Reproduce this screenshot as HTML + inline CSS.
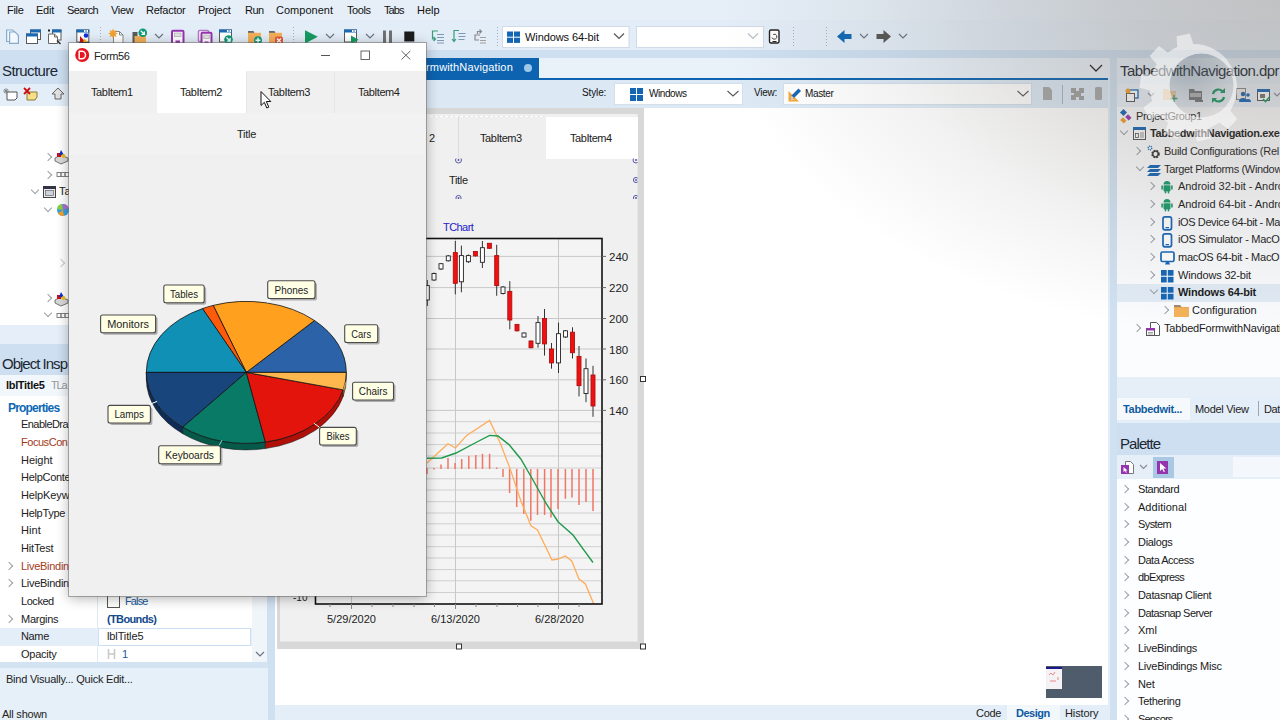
<!DOCTYPE html>
<html><head>
<meta charset="utf-8">
<title>IDE</title>
<style>
*{box-sizing:border-box;margin:0;padding:0}
html,body{width:1280px;height:720px;overflow:hidden}
body{font-family:"Liberation Sans",sans-serif;font-size:11px;color:#1a1a1a;background:#e4eef8;position:relative}
.abs{position:absolute}
.t{position:absolute;white-space:nowrap;line-height:1}
#menubar{left:0;top:0;width:1280px;height:20px;background:#e6eff8}
#toolbar{left:0;top:20px;width:1280px;height:30px;background:#e3edf7}
.menu{top:5px;font-size:11px;color:#111}
.combo{background:#fff;border:1px solid #c5d3e0;height:21px}
/* left */
#left{left:0;top:58px;width:268px;height:664px;background:#e3eef8}
/* center */
#center{left:268px;top:58px;width:844px;height:664px;background:#e3eef8}
/* right */
#right{left:1112px;top:58px;width:168px;height:664px;background:#e9f1f8}
.hdr{font-size:15px;color:#1c2733}
.tree{font-size:11px;color:#1a1a1a}
.chev{position:absolute;width:6px;height:6px;border-right:1px solid #9aa0a6;border-top:1px solid #9aa0a6;transform:rotate(45deg)}
.chevd{position:absolute;width:6px;height:6px;border-right:1px solid #9aa0a6;border-bottom:1px solid #9aa0a6;transform:rotate(45deg)}
</style>
</head>
<body>
<div id="menubar" class="abs"></div>
<div id="toolbar" class="abs"></div>
<div class="abs" style="left:0;top:50px;width:1280px;height:8px;background:#cddff1"></div>
<div id="left" class="abs"></div>
<div id="center" class="abs"></div>
<div id="right" class="abs"></div>

<div class="t menu" style="left: 7px; letter-spacing: -0.31px;">File</div>
<div class="t menu" style="left: 36px; letter-spacing: -0.24px;">Edit</div>
<div class="t menu" style="left: 67px; letter-spacing: -0.64px;">Search</div>
<div class="t menu" style="left: 111px; letter-spacing: -0.29px;">View</div>
<div class="t menu" style="left: 146px; letter-spacing: -0.26px;">Refactor</div>
<div class="t menu" style="left: 198px; letter-spacing: -0.25px;">Project</div>
<div class="t menu" style="left: 245px; letter-spacing: -0.56px;">Run</div>
<div class="t menu" style="left: 276px; letter-spacing: 0.01px;">Component</div>
<div class="t menu" style="left: 347px; letter-spacing: -0.44px;">Tools</div>
<div class="t menu" style="left: 384px; letter-spacing: -0.94px;">Tabs</div>
<div class="t menu" style="left: 417px; letter-spacing: -0.03px;">Help</div>
<svg class="abs" style="left:0;top:20px" width="1280" height="36" viewBox="0 20 1280 36">
 <g fill="#f2f8fd" stroke="#86abcd" stroke-width="1.200"><path d="M6.600 30h6l2.500 2.500v9h-8.500z"></path><path d="M9.600 32h5.500l3.300 3.300v8h-8.800z"></path></g>
 <g><rect x="30.500" y="30" width="10" height="9.500" fill="#fff" stroke="#5a5a5a"></rect><rect x="30" y="29.500" width="11" height="3" fill="#1b68b3"></rect><rect x="26.500" y="34" width="11" height="9.500" fill="#fff" stroke="#5a5a5a"></rect><rect x="26" y="33.500" width="12" height="3" fill="#1b68b3"></rect></g>
 <g><rect x="52.500" y="30" width="8.500" height="10" fill="#fff" stroke="#5a5a5a"></rect><rect x="52" y="29.500" width="9.500" height="3" fill="#1b68b3"></rect><rect x="48" y="29.500" width="2" height="2" fill="#222"></rect><path d="M48.500 34h6l3 3v6.500h-9z" fill="#fff" stroke="#666"></path><path d="M54.500 34v3h3" fill="none" stroke="#666"></path><path d="M57 40.500l3.500 3.500" stroke="#333" stroke-width="1.600"></path></g>
 <g><rect x="76.800" y="30" width="12" height="12" fill="#fff" stroke="#5a5a5a"></rect><rect x="76.300" y="29.500" width="13" height="3" fill="#1b68b3"></rect><rect x="84" y="30" width="1.500" height="2" fill="#fff"></rect><rect x="86.500" y="30" width="1.500" height="2" fill="#fff"></rect><circle cx="86" cy="35.500" r="2.300" fill="#1030e0"></circle><path d="M80 36l5.500 6h-5.500z" fill="#d01010"></path><path d="M84 38.500l5 4.500h-6z" fill="#e8c020"></path><path d="M79 42h10.500v1.500h-10.500z" fill="#111"></path></g>
 <g fill="#a5aeb8"><rect x="100" y="27" width="1" height="1"></rect><rect x="100" y="30" width="1" height="1"></rect><rect x="100" y="33" width="1" height="1"></rect><rect x="100" y="36" width="1" height="1"></rect><rect x="100" y="39" width="1" height="1"></rect><rect x="100" y="42" width="1" height="1"></rect><rect x="100" y="45" width="1" height="1"></rect></g>
 <g><path d="M113.500 31.500h6l3.500 3.500v9h-9.500z" fill="#fff" stroke="#888"></path><path d="M119.500 31.500v3.500h3.500" fill="none" stroke="#888"></path><path d="M113 28.500l1 2.500 2.500-1-1 2.500 2.500 1-2.500 1 1 2.500-2.500-1-1 2.500-1-2.500-2.500 1 1-2.500-2.500-1 2.500-1-1-2.500 2.500 1z" fill="#f0a030"></path></g>
 <g><rect x="132.500" y="32" width="5" height="12" fill="#5a5a5a"></rect><path d="M134.500 36h11.500v8.500h-11.500z" fill="#f3ae58"></path><circle cx="142.800" cy="32.800" r="4.300" fill="#0f9a78"></circle><path d="M140.800 30.800l3.600 3.600m0-3v3h-3" stroke="#fff" stroke-width="1.300" fill="none"></path></g>
 <path d="M155 34l4 4 4-4" stroke="#6a7480" stroke-width="1.200" fill="none"></path>
 <g><rect x="172" y="30.800" width="11.500" height="13" rx="1" fill="#fff" stroke="#9434ae" stroke-width="2"></rect><rect x="174.500" y="33" width="6.500" height="3.500" fill="#e4e4e4" stroke="#aaa" stroke-width=".7"></rect><rect x="175.500" y="40.500" width="4.500" height="3.500" fill="#9434ae"></rect></g>
 <g><rect x="198.500" y="30.500" width="10" height="11" rx="1" fill="#fff" stroke="#b07ac8" stroke-width="1.500"></rect><rect x="201.500" y="32.800" width="10" height="11" rx="1" fill="#fff" stroke="#9434ae" stroke-width="2"></rect><rect x="203.800" y="35" width="5.500" height="3.300" fill="#e4e4e4" stroke="#aaa" stroke-width=".7"></rect><rect x="204.500" y="41.500" width="4" height="2.500" fill="#9434ae"></rect></g>
 <g><rect x="219.500" y="30" width="12" height="12" fill="#fff" stroke="#5a5a5a"></rect><rect x="219" y="29.500" width="13" height="3" fill="#1b68b3"></rect><rect x="227" y="30" width="1.500" height="2" fill="#fff"></rect><rect x="229.500" y="30" width="1.500" height="2" fill="#fff"></rect><circle cx="228.500" cy="39.500" r="4.300" fill="#0f9a78"></circle><path d="M226.500 37.500l3.600 3.600m0-3v3h-3" stroke="#fff" stroke-width="1.300" fill="none"></path></g>
 <g><path d="M248 31h5.500l1 2h-6.500z" fill="#6a6a6a"></path><path d="M248 32.800h13v11.500h-13z" fill="#f3ae58"></path><circle cx="258" cy="40.300" r="4" fill="#0f9a78"></circle><path d="M258 37.800v5m-2.500-2.500h5" stroke="#fff" stroke-width="1.400"></path></g>
 <g><path d="M269 31h5.500l1 2h-6.500z" fill="#6a6a6a"></path><path d="M269 32.800h13v11.500h-13z" fill="#f3ae58"></path><rect x="275" y="36.500" width="8" height="8" rx="1.800" fill="#e2583a"></rect><path d="M277 38.500l4 4m0-4l-4 4" stroke="#fff" stroke-width="1.300"></path></g>
 <g fill="#a5aeb8"><rect x="293" y="27" width="1" height="1"></rect><rect x="293" y="30" width="1" height="1"></rect><rect x="293" y="33" width="1" height="1"></rect><rect x="293" y="36" width="1" height="1"></rect><rect x="293" y="39" width="1" height="1"></rect><rect x="293" y="42" width="1" height="1"></rect><rect x="293" y="45" width="1" height="1"></rect></g>
 <path d="M305 30.200l12.800 6.600-12.800 6.600z" fill="#169a62"></path>
 <path d="M326 34l4 4 4-4" stroke="#6a7480" stroke-width="1.200" fill="none"></path>
 <g><rect x="344.500" y="30" width="12" height="12" fill="#fff" stroke="#5a5a5a"></rect><rect x="344" y="29.500" width="13" height="3" fill="#1b68b3"></rect><rect x="352" y="30" width="1.500" height="2" fill="#fff"></rect><rect x="354.500" y="30" width="1.500" height="2" fill="#fff"></rect><path d="M351 35.500l7.500 4.300-7.500 4.300z" fill="#169a62"></path></g>
 <path d="M366 34l4 4 4-4" stroke="#6a7480" stroke-width="1.200" fill="none"></path>
 <rect x="383" y="30.500" width="3" height="13" fill="#707070"></rect><rect x="389" y="30.500" width="3" height="13" fill="#707070"></rect>
 <rect x="404.300" y="31.500" width="10" height="10" fill="#1c1c1c"></rect>
 <g stroke="#3a9a7a" fill="none" stroke-width="1.200"><path d="M438 31h-5.500v8h3m-2-2l2 2-2 2"></path></g><g stroke="#7f99b5" stroke-width="1.100"><path d="M437 34.500h7M437 37.500h7M437 40.500h7M437 43h7"></path></g>
 <g stroke="#3a9a7a" fill="none" stroke-width="1.200"><path d="M459 30.500h-5v11m-2-2.500l2 2.500 2-2.500"></path></g><g stroke="#7f99b5" stroke-width="1.100"><path d="M458.500 33.500h7M458.500 36.500h7M458.500 39.500h6"></path></g>
 <g stroke="#8a8a8a" fill="none" stroke-width="1.200"><path d="M480 35h-5v5h4M477.500 34v-2.500h4m-2-2l2 2-2 2"></path></g><g stroke="#a0a0a0" stroke-width="1.100"><path d="M480 37.500h6M480 40.500h6M480 43h6"></path></g>
 <g fill="#a5aeb8"><rect x="497" y="27" width="1" height="1"></rect><rect x="497" y="30" width="1" height="1"></rect><rect x="497" y="33" width="1" height="1"></rect><rect x="497" y="36" width="1" height="1"></rect><rect x="497" y="39" width="1" height="1"></rect><rect x="497" y="42" width="1" height="1"></rect><rect x="497" y="45" width="1" height="1"></rect></g>
 <rect x="502.500" y="26.500" width="126.500" height="21" fill="#fff" stroke="#cfdbe7"></rect>
 <g fill="#1565b5"><rect x="507" y="31.500" width="6" height="5.200"></rect><rect x="514" y="31.500" width="6" height="5.200"></rect><rect x="507" y="37.700" width="6" height="5.200"></rect><rect x="514" y="37.700" width="6" height="5.200"></rect></g>
 <path d="M614 33.500l5 5 5-5" stroke="#555" stroke-width="1.200" fill="none"></path>
 <rect x="636.500" y="26.500" width="127" height="21" fill="#fff" stroke="#cfdbe7"></rect>
 <path d="M748 33.500l5 5 5-5" stroke="#b8c0c8" stroke-width="1.200" fill="none"></path>
 <g><rect x="769.500" y="30" width="9.500" height="13" rx="1.500" fill="#fff" stroke="#222" stroke-width="1.400"></rect><path d="M772 37.500a2.500 2.500 0 1 0 1.200-3" stroke="#444" fill="none"></path><path d="M772.500 41.500h4" stroke="#222"></path></g>
 <g fill="#a5aeb8"><rect x="793" y="27" width="1" height="1"></rect><rect x="793" y="30" width="1" height="1"></rect><rect x="793" y="33" width="1" height="1"></rect><rect x="793" y="36" width="1" height="1"></rect><rect x="793" y="39" width="1" height="1"></rect><rect x="793" y="42" width="1" height="1"></rect><rect x="793" y="45" width="1" height="1"></rect></g><g fill="#a5aeb8"><rect x="826" y="27" width="1" height="1"></rect><rect x="826" y="30" width="1" height="1"></rect><rect x="826" y="33" width="1" height="1"></rect><rect x="826" y="36" width="1" height="1"></rect><rect x="826" y="39" width="1" height="1"></rect><rect x="826" y="42" width="1" height="1"></rect><rect x="826" y="45" width="1" height="1"></rect></g>
 <path d="M837 36.500l7.500-6.500v4h7v5h-7v4z" fill="#0d67b5"></path>
 <path d="M860 34l4 4 4-4" stroke="#6a7480" stroke-width="1.200" fill="none"></path>
 <path d="M891 36.500l-7.500-6.500v4h-7v5h7v4z" fill="#555"></path>
 <path d="M899 34l4 4 4-4" stroke="#6a7480" stroke-width="1.200" fill="none"></path>
</svg>
<div class="t" style="left: 525px; top: 32px; font-size: 11px; color: rgb(17, 17, 17); letter-spacing: -0.09px;">Windows 64-bit</div>


<div class="abs" style="left:0;top:52px;width:268px;height:32px;background:#cddff0"></div>
<div class="t hdr" style="left: 2px; top: 63px; letter-spacing: -0.6px;">Structure</div>
<div class="abs" style="left:0;top:84px;width:268px;height:22px;background:#e3eef8"></div>
<svg class="abs" style="left:0;top:84px" width="70" height="22" viewBox="0 84 70 22">
 <path d="M7 92h10v6l-2 2h-8z" fill="#fff" stroke="#555"></path><path d="M6 88v6m-3-3h6m-5-2l4 4m0-4l-4 4" stroke="#777" stroke-width=".8"></path>
 <path d="M27 92h10v5l-2 3h-8z" fill="#f5e08a" stroke="#8a7a30"></path><path d="M24 88l6 6m0-6l-6 6" stroke="#d01010" stroke-width="1.800"></path>
 <path d="M58 88l6 6h-3v5h-6v-5h-3z" fill="#e0e0e0" stroke="#666"></path>
</svg>
<div class="abs" style="left:0;top:106px;width:268px;height:218.500px;background:#fff"></div>
<div class="chev" style="left:45px;top:154px"></div>
<div class="chev" style="left:45px;top:172px"></div>
<div class="chevd" style="left:32px;top:187px"></div>
<div class="chevd" style="left:45px;top:205px"></div>
<div class="chev" style="left:58px;top:260px;border-color:#c5c9ce"></div>
<div class="chev" style="left:45px;top:295px"></div>
<div class="chevd" style="left:45px;top:310px"></div>
<svg class="abs" style="left:40px;top:148px" width="30" height="175" viewBox="40 148 30 175">
 <g id="cmp"><path d="M55 158l6-3 7 3v3l-7 3-6-3z" fill="#d8d8d8" stroke="#555" stroke-width=".8"></path><rect x="57" y="153" width="4" height="4" fill="#d01010"></rect><path d="M61 150l3 5h-5z" fill="#1030d0"></path><circle cx="63.500" cy="156" r="2" fill="#e8c020"></circle></g>
 <g fill="none" stroke="#777" stroke-width=".9"><rect x="57" y="172.500" width="4" height="4"></rect><rect x="61" y="172.500" width="4" height="4"></rect><rect x="65" y="172.500" width="4" height="4"></rect></g>
 <rect x="43.500" y="186.500" width="12" height="11" fill="#e8eaee" stroke="#444"></rect><rect x="43" y="186" width="13" height="3" fill="#334"></rect><rect x="45.500" y="190.500" width="8" height="5" fill="#cfd3da" stroke="#666" stroke-width=".7"></rect>
 <g><circle cx="63" cy="210" r="6" fill="#3aa0e0"></circle><path d="M63 210l-6-1a6 6 0 0 1 5-5z" fill="#8ad040"></path><path d="M63 210v-6a6 6 0 0 1 5.500 4z" fill="#b070d0"></path><path d="M63 210l-5 3.500a6 6 0 0 0 6 2.500z" fill="#f0a030"></path></g>
 <g transform="translate(0,142)"><path d="M55 158l6-3 7 3v3l-7 3-6-3z" fill="#d8d8d8" stroke="#555" stroke-width=".8"></path><rect x="57" y="153" width="4" height="4" fill="#d01010"></rect><path d="M61 150l3 5h-5z" fill="#1030d0"></path><circle cx="63.500" cy="156" r="2" fill="#e8c020"></circle></g>
 <g fill="none" stroke="#777" stroke-width=".9"><rect x="57" y="313.500" width="4" height="4"></rect><rect x="61" y="313.500" width="4" height="4"></rect><rect x="65" y="313.500" width="4" height="4"></rect></g>
</svg>
<div class="t" style="left:59px;top:186px;font-size:11px;color:#222">Ta</div>
<div class="abs" style="left:0;top:324.500px;width:268px;height:19px;background:#e6eff9"></div>
<div class="abs" style="left:0;top:344px;width:268px;height:31px;background:#cddff0"></div>
<div class="t hdr" style="left: 2px; top: 356px; letter-spacing: -0.99px;">Object Insp</div>
<div class="abs" style="left:0;top:375px;width:268px;height:21px;background:#f2f7fc"></div>
<div class="t" style="left: 6px; top: 380px; font-size: 11px; font-weight: bold; color: rgb(17, 17, 17); letter-spacing: -0.32px;">lblTitle5</div>
<div class="t" style="left: 51px; top: 380px; font-size: 11px; color: rgb(153, 153, 153); letter-spacing: -1.16px;">TLa</div>
<div class="abs" style="left:0;top:396px;width:268px;height:266px;background:#fff"></div>
<div class="t" style="left: 8px; top: 402px; font-size: 12px; font-weight: bold; color: rgb(13, 103, 181); letter-spacing: -0.81px;">Properties</div>
<div class="abs" style="left:97px;top:415px;width:1px;height:247px;background:#e0e9f2"></div>
<div class="abs" style="left:0;top:628px;width:252px;height:18px;background:#e3eef9"></div>
<div class="abs" style="left:98px;top:628px;width:153px;height:18px;background:#fff;border:1px solid #cbe0f4"></div>
<div class="abs" style="left:252px;top:415px;width:15px;height:247px;background:#f0f5fa"></div>
<div class="abs" style="left:267px;top:330px;width:8px;height:390px;background:#cfe0f1"></div>
<svg class="abs" style="left:254px;top:649px" width="12" height="10"><path d="M2 3l4 4 4-4" stroke="#6a7480" stroke-width="1.200" fill="none"></path></svg>
<div class="t" style="left: 21px; top: 419px; font-size: 11px; color: rgb(34, 34, 34); letter-spacing: -0.55px;">EnableDra</div>
<div class="t" style="left: 21px; top: 437px; font-size: 11px; color: rgb(162, 58, 26); letter-spacing: -0.46px;">FocusCon</div>
<div class="t" style="left: 21px; top: 455px; font-size: 11px; color: rgb(34, 34, 34); letter-spacing: -0.05px;">Height</div>
<div class="t" style="left: 21px; top: 472px; font-size: 11px; color: rgb(34, 34, 34); letter-spacing: -0.28px;">HelpConte</div>
<div class="t" style="left: 21px; top: 490px; font-size: 11px; color: rgb(34, 34, 34); letter-spacing: -0.13px;">HelpKeyw</div>
<div class="t" style="left: 21px; top: 508px; font-size: 11px; color: rgb(34, 34, 34); letter-spacing: -0.31px;">HelpType</div>
<div class="t" style="left: 21px; top: 525px; font-size: 11px; color: rgb(34, 34, 34); letter-spacing: 0.11px;">Hint</div>
<div class="t" style="left: 21px; top: 543px; font-size: 11px; color: rgb(34, 34, 34); letter-spacing: -0.16px;">HitTest</div>
<div class="t" style="left: 21px; top: 561px; font-size: 11px; color: rgb(162, 58, 26); letter-spacing: -0.28px;">LiveBindin</div>
<div class="chev" style="left:6px;top:563px"></div>
<div class="t" style="left: 21px; top: 578px; font-size: 11px; color: rgb(34, 34, 34); letter-spacing: -0.28px;">LiveBindin</div>
<div class="chev" style="left:6px;top:580px"></div>
<div class="t" style="left: 21px; top: 596px; font-size: 11px; color: rgb(34, 34, 34); letter-spacing: -0.45px;">Locked</div>
<div class="t" style="left: 21px; top: 614px; font-size: 11px; color: rgb(34, 34, 34); letter-spacing: -0.26px;">Margins</div>
<div class="chev" style="left:6px;top:616px"></div>
<div class="t" style="left: 21px; top: 631px; font-size: 11px; color: rgb(34, 34, 34); letter-spacing: -0.36px;">Name</div>
<div class="t" style="left: 21px; top: 649px; font-size: 11px; color: rgb(34, 34, 34); letter-spacing: -0.24px;">Opacity</div>

<div class="abs" style="left:107px;top:595px;width:13px;height:13px;background:#fff;border:1px solid #555"></div>
<div class="t" style="left: 125px; top: 596px; font-size: 11px; color: rgb(26, 90, 154); letter-spacing: -0.86px;">False</div>
<div class="t" style="left: 107px; top: 614px; font-size: 11px; font-weight: bold; color: rgb(18, 74, 138); letter-spacing: -0.63px;">(TBounds)</div>
<div class="t" style="left: 107px; top: 631px; font-size: 11px; color: rgb(34, 34, 34); letter-spacing: -0.12px;">lblTitle5</div>
<svg class="abs" style="left:106px;top:647px" width="12" height="14"><path d="M2.500 2v10M8.500 2v10M2.500 7h6" stroke="#c8c8c8" stroke-width="1.500" fill="none"></path></svg>
<div class="t" style="left:122px;top:649px;font-size:11px;color:#1a5a9a">1</div>
<div class="abs" style="left:0;top:662px;width:268px;height:6px;background:#d3e3f2"></div>
<div class="abs" style="left:0;top:668px;width:268px;height:52px;background:#e6f0f9"></div>
<div class="t" style="left: 6px; top: 674px; font-size: 11px; color: rgb(34, 34, 34); letter-spacing: -0.23px;">Bind Visually... Quick Edit...</div>
<div class="t" style="left: 2px; top: 709px; font-size: 11px; color: rgb(34, 34, 34); letter-spacing: -0.23px;">All shown</div>


<div class="abs" style="left:268px;top:58px;width:844px;height:20px;background:#e9f1f9"></div>
<div class="abs" style="left:275px;top:58px;width:264px;height:21px;background:#0d63b0"></div>
<div class="t" style="left: 426px; top: 62px; font-size: 11px; color: rgb(255, 255, 255); letter-spacing: 0.16px;">rmwithNavigation</div><div class="t" style="right:854px;top:62px;font-size:11px;color:#fff;">TabbedFo</div>
<div class="abs" style="left:524px;top:64px;width:8px;height:8px;border-radius:4px;background:#9cc8ea"></div>
<div class="abs" style="left:275px;top:78px;width:833px;height:2px;background:#0d63b0"></div>
<svg class="abs" style="left:1088px;top:62px" width="16" height="12"><path d="M2 3l6 6 6-6" stroke="#222" stroke-width="1.300" fill="none"></path></svg>
<div class="abs" style="left:275px;top:80px;width:833px;height:28px;background:#dce9f5"></div>
<div class="t" style="left: 582px; top: 88px; font-size: 10px; color: rgb(17, 17, 17); letter-spacing: -0.13px;">Style:</div>
<div class="abs" style="left:614px;top:82.500px;width:128.500px;height:22.500px;background:#fff;border:1px solid #d3dfea"></div>
<svg class="abs" style="left:629px;top:87px" width="16" height="16"><g fill="#1565b5"><rect x="1" y="1" width="6" height="6"></rect><rect x="8" y="1" width="6" height="6"></rect><rect x="1" y="8" width="6" height="6"></rect><rect x="8" y="8" width="6" height="6"></rect></g></svg>
<div class="t" style="left: 649px; top: 89px; font-size: 10px; color: rgb(17, 17, 17); letter-spacing: -0.44px;">Windows</div>
<svg class="abs" style="left:726px;top:88px" width="14" height="12"><path d="M1.500 3l5.500 5 5.500-5" stroke="#5a5a5a" stroke-width="1.100" fill="none"></path></svg>
<div class="t" style="left: 754px; top: 88px; font-size: 10px; color: rgb(17, 17, 17); letter-spacing: -0.26px;">View:</div>
<div class="abs" style="left:783px;top:82.500px;width:249px;height:22.500px;background:#fff;border:1px solid #d3dfea"></div>
<svg class="abs" style="left:787px;top:86px" width="16" height="18"><path d="M1.500 5v10.500h10.500z" fill="#f3a83a"></path><path d="M4 10.500v3h3z" fill="#fff"></path><path d="M3.500 13l1-3.500 7-7 2.500 2.500-7 7z" fill="#1565b5"></path><path d="M3.500 13l1-3.500 2.500 2.500z" fill="#f6d8a8"></path></svg>
<div class="t" style="left: 805px; top: 89px; font-size: 10px; color: rgb(17, 17, 17); letter-spacing: -0.34px;">Master</div>
<svg class="abs" style="left:1016px;top:88px" width="14" height="12"><path d="M1.500 3l5.500 5 5.500-5" stroke="#5a5a5a" stroke-width="1.100" fill="none"></path></svg>
<svg class="abs" style="left:1038px;top:84px" width="70" height="22" viewBox="1038 84 70 22"><path d="M1043 87h6l3 3v10h-9z" fill="#a8a8a8"></path><path d="M1062.500 85v19" stroke="#aab4be"></path><path d="M1071 88h5v3h3v-3h5v5h-3v3h3v4h-5v-3h-3v3h-5v-5h3v-2h-3z" fill="#a0a0a0"></path><rect x="1095" y="87" width="7" height="13" rx="1.500" fill="#a8a8a8"></rect></svg>
<div class="abs" style="left:275px;top:108px;width:833px;height:596.500px;background:#fff"></div>

<!-- form designer -->
<div class="abs" style="left:277px;top:108px;width:367px;height:541px;background:#d8d8d8"></div>
<div class="abs" style="left:280px;top:114px;width:357.500px;height:528px;background:#f0f0f0;border-right:1px solid #e6e6e6;border-bottom:1px solid #e6e6e6"></div><div class="abs" style="left:430px;top:116px;width:116px;height:1px;background:repeating-linear-gradient(90deg,#fff 0 3px,#e4e4e4 3px 5px)"></div>
<div class="abs" style="left:458px;top:117px;width:88px;height:41.500px;background:#efefef;border-left:1px solid #dcdcdc"></div>
<div class="abs" style="left:546px;top:116.500px;width:91.500px;height:42px;background:#fff"></div>
<div class="t" style="left:429px;top:133px;font-size:11px;color:#222">2</div>
<div class="t" style="left: 480px; top: 133px; font-size: 11px; color: rgb(34, 34, 34); letter-spacing: -0.44px;">TabItem3</div>
<div class="t" style="left: 570px; top: 133px; font-size: 11px; color: rgb(34, 34, 34); letter-spacing: -0.44px;">TabItem4</div>
<div class="t" style="left: 449px; top: 175px; font-size: 11px; color: rgb(34, 34, 34); letter-spacing: -0.33px;">Title</div>
<div class="t" style="left: 443px; top: 222px; font-size: 11px; color: rgb(34, 34, 200); letter-spacing: -0.56px;">TChart</div>
<svg class="abs" style="left:275px;top:108px" width="375" height="545" viewBox="275 108 375 545" font-family="Liberation Sans, sans-serif">
 <defs><clipPath id="dc"><rect x="275" y="158.500" width="362.500" height="40.500"></rect></clipPath></defs><g clip-path="url(#dc)"><g fill="none" stroke="#5a5aa8" stroke-width="1"><circle cx="458.500" cy="160" r="3"></circle><circle cx="458.500" cy="198" r="2.600"></circle><circle cx="636" cy="160" r="3"></circle><circle cx="636" cy="180" r="2.600"></circle><circle cx="636" cy="198" r="2.600"></circle></g><g fill="#5a5aa8"><circle cx="458.500" cy="160" r="1"></circle><circle cx="458.500" cy="198" r="1"></circle><circle cx="636" cy="160" r="1"></circle><circle cx="636" cy="180" r="1"></circle><circle cx="636" cy="198" r="1"></circle></g></g>
 <rect x="315" y="238" width="287" height="366" fill="#f4f4f4"></rect>
 <path d="M316 256.4H601" stroke="#c8c8c8" stroke-width="1"></path><path d="M316 287.6H601" stroke="#c8c8c8" stroke-width="1"></path><path d="M316 318.5H601" stroke="#c8c8c8" stroke-width="1"></path><path d="M316 349H601" stroke="#c8c8c8" stroke-width="1"></path><path d="M316 379.8H601" stroke="#c8c8c8" stroke-width="1"></path><path d="M316 410.4H601" stroke="#c8c8c8" stroke-width="1"></path><path d="M316 421.7H601" stroke="#cfcfcf" stroke-width="1"></path><path d="M316 433H601" stroke="#cfcfcf" stroke-width="1"></path><path d="M316 444.6H601" stroke="#cfcfcf" stroke-width="1"></path><path d="M316 456H601" stroke="#cfcfcf" stroke-width="1"></path><path d="M316 468H601" stroke="#cfcfcf" stroke-width="1"></path><path d="M316 478.8H601" stroke="#cfcfcf" stroke-width="1"></path><path d="M316 490H601" stroke="#cfcfcf" stroke-width="1"></path><path d="M316 501.7H601" stroke="#cfcfcf" stroke-width="1"></path><path d="M316 513H601" stroke="#cfcfcf" stroke-width="1"></path><path d="M316 523.8H601" stroke="#cfcfcf" stroke-width="1"></path><path d="M316 535H601" stroke="#cfcfcf" stroke-width="1"></path><path d="M316 546.7H601" stroke="#cfcfcf" stroke-width="1"></path><path d="M316 558H601" stroke="#cfcfcf" stroke-width="1"></path><path d="M316 569.6H601" stroke="#cfcfcf" stroke-width="1"></path><path d="M316 580.8H601" stroke="#cfcfcf" stroke-width="1"></path><path d="M316 592.5H601" stroke="#cfcfcf" stroke-width="1"></path><path d="M351.5 239V603" stroke="#c8c8c8" stroke-width="1"></path><path d="M455.5 239V603" stroke="#c8c8c8" stroke-width="1"></path><path d="M558.5 239V603" stroke="#c8c8c8" stroke-width="1"></path>
 <path d="M427 468V474" stroke="#f27664" stroke-width="1.500"></path><path d="M434 468V469.5" stroke="#f27664" stroke-width="1.500"></path><path d="M441 464.6V469" stroke="#f27664" stroke-width="1.500"></path><path d="M448 458V469" stroke="#f27664" stroke-width="1.500"></path><path d="M455 463V469" stroke="#f27664" stroke-width="1.500"></path><path d="M461.7 459V469" stroke="#f27664" stroke-width="1.500"></path><path d="M468.8 455.8V469" stroke="#f27664" stroke-width="1.500"></path><path d="M475.8 455V469" stroke="#f27664" stroke-width="1.500"></path><path d="M482.5 453.8V469" stroke="#f27664" stroke-width="1.500"></path><path d="M489.6 453.8V469" stroke="#f27664" stroke-width="1.500"></path><path d="M496.7 467.5V469" stroke="#f27664" stroke-width="1.500"></path><path d="M503 469V477" stroke="#f27664" stroke-width="1.500"></path><path d="M509.6 469V493" stroke="#f27664" stroke-width="1.500"></path><path d="M516.7 469V507" stroke="#f27664" stroke-width="1.500"></path><path d="M523.8 469V514" stroke="#f27664" stroke-width="1.500"></path><path d="M530.8 469V520.8" stroke="#f27664" stroke-width="1.500"></path><path d="M537.5 469V515" stroke="#f27664" stroke-width="1.500"></path><path d="M544.6 469V515" stroke="#f27664" stroke-width="1.500"></path><path d="M551 469V517.5" stroke="#f27664" stroke-width="1.500"></path><path d="M558 469V509" stroke="#f27664" stroke-width="1.500"></path><path d="M565.4 469V498.8" stroke="#f27664" stroke-width="1.500"></path><path d="M572 469V497.5" stroke="#f27664" stroke-width="1.500"></path><path d="M579 469V505" stroke="#f27664" stroke-width="1.500"></path><path d="M586 469V502" stroke="#f27664" stroke-width="1.500"></path><path d="M593 469V511" stroke="#f27664" stroke-width="1.500"></path>
 <path d="M427 463 L448 443.8 L455.4 448 L466.7 435.4 L489.6 420.4 L500 442.5 L510.4 469.6 L520.8 500.8 L531 525.8 L537.5 530 L552 560 L558 559 L565.4 556 L571.7 561 L579 579 L585.4 584 L593.8 604" fill="none" stroke="#ffac5a" stroke-width="1.300"></path>
 <path d="M427 458.3 L441.7 458 L456 453 L475 443 L489.6 435.4 L498 436 L509 444.6 L520.8 459 L533 480 L545.8 503 L558 521.7 L573 535 L583 548.8 L593 562.5" fill="none" stroke="#1f9a4a" stroke-width="1.400"></path>
 <path d="M427.3 280.0V306.0" stroke="#333" stroke-width="1"></path><rect x="425.3" y="285.6" width="4" height="14.4" fill="#fff" stroke="#222" stroke-width=".9"></rect>
<path d="M434.0 272.5V281.0" stroke="#333" stroke-width="1"></path><rect x="432.0" y="273.5" width="4" height="6.5" fill="#fff" stroke="#222" stroke-width=".9"></rect>
<path d="M441.0 263.0V270.0" stroke="#333" stroke-width="1"></path><rect x="439.0" y="263.7" width="4" height="5.3" fill="#fff" stroke="#222" stroke-width=".9"></rect>
<path d="M448.3 255.0V261.5" stroke="#333" stroke-width="1"></path><rect x="446.3" y="255.9" width="4" height="4.9" fill="#fff" stroke="#222" stroke-width=".9"></rect>
<path d="M455.3 241.0V294.3" stroke="#333" stroke-width="1"></path><rect x="453.3" y="252.6" width="4" height="30.7" fill="#f01010" stroke="#b01010" stroke-width=".9"></rect>
<path d="M461.4 245.6V292.3" stroke="#333" stroke-width="1"></path><rect x="459.4" y="255.6" width="4" height="26.2" fill="#fff" stroke="#222" stroke-width=".9"></rect>
<path d="M468.4 254.4V263.0" stroke="#333" stroke-width="1"></path><rect x="466.4" y="255.6" width="4" height="6.1" fill="#fff" stroke="#222" stroke-width=".9"></rect>
<path d="M475.4 251.0V256.5" stroke="#333" stroke-width="1"></path><rect x="473.4" y="251.5" width="4" height="4.4" fill="#f01010" stroke="#b01010" stroke-width=".9"></rect>
<path d="M482.4 241.0V268.0" stroke="#333" stroke-width="1"></path><rect x="480.4" y="247.7" width="4" height="14.6" fill="#fff" stroke="#222" stroke-width=".9"></rect>
<path d="M489.4 243.0V249.0" stroke="#333" stroke-width="1"></path><rect x="487.4" y="243.3" width="4" height="5.0" fill="#f01010" stroke="#b01010" stroke-width=".9"></rect>
<path d="M496.7 244.8V295.8" stroke="#333" stroke-width="1"></path><rect x="494.7" y="255.6" width="4" height="30.0" fill="#f01010" stroke="#b01010" stroke-width=".9"></rect>
<path d="M503.0 286.0V294.5" stroke="#333" stroke-width="1"></path><rect x="501.0" y="287.0" width="4" height="6.5" fill="#fff" stroke="#222" stroke-width=".9"></rect>
<path d="M509.8 281.2V329.3" stroke="#333" stroke-width="1"></path><rect x="507.8" y="291.4" width="4" height="28.6" fill="#f01010" stroke="#b01010" stroke-width=".9"></rect>
<path d="M517.0 324.0V331.5" stroke="#333" stroke-width="1"></path><rect x="515.0" y="324.4" width="4" height="6.4" fill="#f01010" stroke="#b01010" stroke-width=".9"></rect>
<path d="M524.0 332.5V337.5" stroke="#333" stroke-width="1"></path><rect x="522.0" y="333.0" width="4" height="4.0" fill="#fff" stroke="#222" stroke-width=".9"></rect>
<path d="M531.0 340.5V348.3" stroke="#333" stroke-width="1"></path><rect x="529.0" y="341.0" width="4" height="6.7" fill="#f01010" stroke="#b01010" stroke-width=".9"></rect>
<path d="M538.0 316.0V347.7" stroke="#333" stroke-width="1"></path><rect x="536.0" y="322.6" width="4" height="20.7" fill="#fff" stroke="#222" stroke-width=".9"></rect>
<path d="M544.5 309.0V355.6" stroke="#333" stroke-width="1"></path><rect x="542.5" y="318.5" width="4" height="25.4" fill="#f01010" stroke="#b01010" stroke-width=".9"></rect>
<path d="M551.5 343.0V368.7" stroke="#333" stroke-width="1"></path><rect x="549.5" y="349.0" width="4" height="13.9" fill="#f01010" stroke="#b01010" stroke-width=".9"></rect>
<path d="M558.5 322.6V373.0" stroke="#333" stroke-width="1"></path><rect x="556.5" y="333.7" width="4" height="29.2" fill="#fff" stroke="#222" stroke-width=".9"></rect>
<path d="M565.5 330.0V338.0" stroke="#333" stroke-width="1"></path><rect x="563.5" y="330.8" width="4" height="6.2" fill="#fff" stroke="#222" stroke-width=".9"></rect>
<path d="M572.5 327.3V358.5" stroke="#333" stroke-width="1"></path><rect x="570.5" y="332.2" width="4" height="20.5" fill="#f01010" stroke="#b01010" stroke-width=".9"></rect>
<path d="M579.0 346.0V396.4" stroke="#333" stroke-width="1"></path><rect x="577.0" y="356.4" width="4" height="29.2" fill="#f01010" stroke="#b01010" stroke-width=".9"></rect>
<path d="M586.0 358.5V402.2" stroke="#333" stroke-width="1"></path><rect x="584.0" y="368.7" width="4" height="24.8" fill="#fff" stroke="#222" stroke-width=".9"></rect>
<path d="M593.0 365.8V416.8" stroke="#333" stroke-width="1"></path><rect x="591.0" y="375.0" width="4" height="31.0" fill="#f01010" stroke="#b01010" stroke-width=".9"></rect>

 <rect x="315.500" y="238.500" width="286.500" height="365.500" fill="none" stroke="#111" stroke-width="1.600"></rect>
 <path d="M330 604v3" stroke="#888" stroke-width="1"></path><path d="M351.5 604v5" stroke="#888" stroke-width="1"></path><path d="M372 604v3" stroke="#888" stroke-width="1"></path><path d="M393 604v3" stroke="#888" stroke-width="1"></path><path d="M414 604v3" stroke="#888" stroke-width="1"></path><path d="M434.5 604v3" stroke="#888" stroke-width="1"></path><path d="M455.5 604v5" stroke="#888" stroke-width="1"></path><path d="M476 604v3" stroke="#888" stroke-width="1"></path><path d="M497 604v3" stroke="#888" stroke-width="1"></path><path d="M517.5 604v3" stroke="#888" stroke-width="1"></path><path d="M538 604v3" stroke="#888" stroke-width="1"></path><path d="M558.5 604v5" stroke="#888" stroke-width="1"></path><path d="M579 604v3" stroke="#888" stroke-width="1"></path><path d="M602 256.4h4" stroke="#666" stroke-width="1"></path><path d="M602 287.6h4" stroke="#666" stroke-width="1"></path><path d="M602 318.5h4" stroke="#666" stroke-width="1"></path><path d="M602 349h4" stroke="#666" stroke-width="1"></path><path d="M602 379.8h4" stroke="#666" stroke-width="1"></path><path d="M602 410.4h4" stroke="#666" stroke-width="1"></path>
 <g font-size="11.500" fill="#222"><text x="609" y="261">240</text><text x="609" y="292">220</text><text x="609" y="323">200</text><text x="609" y="354">180</text><text x="609" y="384">160</text><text x="609" y="415">140</text>
 <text x="327" y="623" textLength="49" lengthAdjust="spacingAndGlyphs">5/29/2020</text><text x="431" y="623" textLength="49" lengthAdjust="spacingAndGlyphs">6/13/2020</text><text x="535" y="623" textLength="49" lengthAdjust="spacingAndGlyphs">6/28/2020</text>
 <text x="293" y="601" font-size="10">-10</text></g>
 <g fill="#fff" stroke="#333" stroke-width="1"><rect x="456.500" y="644" width="5" height="5"></rect><rect x="640.500" y="644" width="5" height="5"></rect><rect x="640.500" y="376.500" width="5" height="5"></rect></g>
</svg>
<!-- bottom bar -->
<div class="abs" style="left:275px;top:704.500px;width:833px;height:16px;background:#e3eef8"></div>
<div class="abs" style="left:1007px;top:704.500px;width:53px;height:16px;background:#f2f7fc"></div>
<div class="t" style="left: 976px; top: 708px; font-size: 11px; color: rgb(34, 34, 34); letter-spacing: -0.27px;">Code</div>
<div class="t" style="left: 1016px; top: 708px; font-size: 11px; color: rgb(13, 90, 160); font-weight: bold; letter-spacing: -0.48px;">Design</div>
<div class="t" style="left: 1065px; top: 708px; font-size: 11px; color: rgb(34, 34, 34); letter-spacing: -0.1px;">History</div>
<div class="abs" style="left:1046px;top:666px;width:56px;height:32px;background:#4e5c6c"></div>
<div class="abs" style="left:1046px;top:667px;width:16px;height:22px;background:#f4f2f4;border-top:2px solid #1a1a8a"></div><svg class="abs" style="left:1046px;top:667px" width="16" height="22"><path d="M3 8l2-2 2 2 2-3M12 10v3M4 14h6" stroke="#e05050" stroke-width=".8" fill="none" opacity=".8"></path></svg>


<div class="abs" style="left:1112px;top:58px;width:168px;height:26px;background:#e3eef8"></div>
<div class="abs" style="left:1112px;top:84px;width:168px;height:23px;background:#e9f1f9"></div>
<div class="abs" style="left:1116px;top:107px;width:164px;height:270px;background:#fbfcfe"></div><div class="abs" style="left:1116px;top:377px;width:164px;height:20px;background:#e6eff7"></div>
<div class="abs" style="left:1116px;top:284px;width:164px;height:18px;background:#e2ecf6"></div>
<div class="t hdr" style="left: 1120px; top: 63px; letter-spacing: -0.57px;">TabbedwithNavigation.dpr</div>
<svg class="abs" style="left:1112px;top:84px" width="168" height="24" viewBox="1112 84 168 24">
 <g><rect x="1129" y="90" width="9" height="8" fill="#fff" stroke="#1565b5" stroke-width="1.300"></rect><rect x="1126.500" y="93.500" width="8" height="8" fill="#fff" stroke="#555"></rect><circle cx="1128" cy="91" r="2.500" fill="#f0a030"></circle></g>
 <path d="M1148 93l3 3 3-3" stroke="#889" stroke-width="1.100" fill="none"></path>
 <g><path d="M1163 89h5l1 2h7v9h-13z" fill="#f5cfa0"></path><path d="M1174 95v7m-3.500-3.500h7" stroke="#3aa080" stroke-width="1.300"></path></g>
 <g><path d="M1189 89h5l1 2h7v9h-13z" fill="#777"></path><rect x="1190" y="93" width="11" height="4" fill="#bbb"></rect><path d="M1195 101h8" stroke="#333" stroke-width="1.300"></path></g>
 <g fill="none" stroke="#169a62" stroke-width="2.200"><path d="M1213 94a5.500 5.500 0 0 1 10-2"></path><path d="M1224 97a5.500 5.500 0 0 1 -10 2"></path></g><path d="M1225 88v5h-5z" fill="#169a62"></path><path d="M1212 103v-5h5z" fill="#169a62"></path>
 <g><rect x="1236.500" y="88.500" width="9" height="11" fill="#eee" stroke="#888"></rect><circle cx="1243" cy="94" r="2.200" fill="#1565b5"></circle><path d="M1239 102a4 4 0 0 1 8 0z" fill="#1565b5"></path><circle cx="1248" cy="95" r="1.800" fill="#1565b5"></circle><path d="M1245 102a3 3 0 0 1 6 0z" fill="#1565b5"></path></g>
 <g><rect x="1257.500" y="89.500" width="12" height="11" fill="#fff" stroke="#555"></rect><rect x="1257" y="89" width="13" height="3" fill="#1565b5"></rect><rect x="1260" y="94" width="5" height="4" fill="#777"></rect><path d="M1263 99l2.500 2.500 4.500-5" stroke="#169a62" stroke-width="1.600" fill="none"></path></g>
 <path d="M1274 93l3 3 3-3" stroke="#889" stroke-width="1.100" fill="none"></path>
</svg>
<svg class="abs" style="left:1112px;top:108px" width="168" height="232" viewBox="1112 107 168 232"><g transform="translate(1118,109)"><rect x="3" y="0" width="5" height="5" transform="rotate(45 5.500 2.500)" fill="#1565b5"></rect><rect x="8" y="5" width="5" height="4" transform="rotate(45 10 7)" fill="#9434ae"></rect><rect x="3" y="8" width="5" height="4" transform="rotate(45 5 10)" fill="#f0a030"></rect></g><g transform="translate(1133,126)"><rect x=".5" y=".5" width="12" height="12" fill="#fff" stroke="#555"></rect><rect x="0" y="0" width="13" height="3" fill="#1565b5"></rect><rect x="2.500" y="6.500" width="3" height="4" fill="none" stroke="#555" stroke-width=".8"></rect><path d="M7 6h4M7 8h4M7 10h4" stroke="#777" stroke-width=".8"></path></g><g transform="translate(1147,144)"><circle cx="8.500" cy="9" r="3.200" fill="none" stroke="#333" stroke-width="2.200" stroke-dasharray="1.600 1"></circle><circle cx="8.500" cy="9" r="2.800" fill="none" stroke="#333" stroke-width="1.200"></circle><circle cx="3" cy="3" r="1.800" fill="none" stroke="#1565b5" stroke-width="1.400" stroke-dasharray="1 .7"></circle></g><g transform="translate(1147,162)" fill="#1565b5"><path d="M3 2h11l-3 3h-11z"></path><path d="M3 6h11l-3 3h-11z"></path><path d="M3 10h11l-3 3h-11z"></path></g><g transform="translate(1160,179)" fill="#1a9a6a"><path d="M3.500 4.500a3.500 3.500 0 0 1 7 0z"></path><rect x="3.500" y="5.200" width="7" height="6" rx=".8"></rect><rect x="1.300" y="5.200" width="1.600" height="4.500" rx=".8"></rect><rect x="11.100" y="5.200" width="1.600" height="4.500" rx=".8"></rect><rect x="4.700" y="10.500" width="1.600" height="3" rx=".7"></rect><rect x="7.700" y="10.500" width="1.600" height="3" rx=".7"></rect></g><g transform="translate(1160,197)" fill="#1a9a6a"><path d="M3.500 4.500a3.500 3.500 0 0 1 7 0z"></path><rect x="3.500" y="5.200" width="7" height="6" rx=".8"></rect><rect x="1.300" y="5.200" width="1.600" height="4.500" rx=".8"></rect><rect x="11.100" y="5.200" width="1.600" height="4.500" rx=".8"></rect><rect x="4.700" y="10.500" width="1.600" height="3" rx=".7"></rect><rect x="7.700" y="10.500" width="1.600" height="3" rx=".7"></rect></g><g transform="translate(1160,215)"><rect x="3" y=".8" width="8.500" height="13" rx="2" fill="#fff" stroke="#1565b5" stroke-width="1.700"></rect><rect x="5.500" y="11" width="3.500" height="1.300" fill="#1565b5"></rect></g><g transform="translate(1160,232)"><rect x="3" y=".8" width="8.500" height="13" rx="2" fill="#fff" stroke="#1565b5" stroke-width="1.700"></rect><rect x="5.500" y="11" width="3.500" height="1.300" fill="#1565b5"></rect></g><g transform="translate(1160,250)"><rect x="1" y="1" width="13" height="9.500" rx="1.500" fill="#fff" stroke="#1565b5" stroke-width="1.700"></rect><path d="M5 13.500h5l-1-2.500h-3z" fill="#1565b5"></path></g><g transform="translate(1160,268)" fill="#1565b5"><rect x="1" y="1" width="5.700" height="5.700"></rect><rect x="7.800" y="1" width="5.700" height="5.700"></rect><rect x="1" y="7.800" width="5.700" height="5.700"></rect><rect x="7.800" y="7.800" width="5.700" height="5.700"></rect></g><g transform="translate(1160,285)" fill="#1565b5"><rect x="1" y="1" width="5.700" height="5.700"></rect><rect x="7.800" y="1" width="5.700" height="5.700"></rect><rect x="1" y="7.800" width="5.700" height="5.700"></rect><rect x="7.800" y="7.800" width="5.700" height="5.700"></rect></g><g transform="translate(1174,303)"><path d="M0 1h6l1.500 2h7.500v10h-15z" fill="#f0a850"></path><path d="M0 1h6l1.500 2h-7.500z" fill="#9a8a70"></path><rect x="0" y="4" width="15" height="9" fill="#f5b258"></rect></g><g transform="translate(1146,321)"><path d="M4.500 .5h6l3 3v10h-9z" fill="#fff" stroke="#555"></path><rect x="0.500" y="6.500" width="8" height="7" fill="#fff" stroke="#555"></rect><rect x="0" y="6" width="9" height="2.500" fill="#9434ae"></rect><path d="M2 10.500h5M2 12h5" stroke="#777" stroke-width=".7"></path></g></svg>
<div class="t" style="left: 1136px; top: 111px; font-size: 11px; color: rgb(26, 26, 26); letter-spacing: -0.4px;">ProjectGroup1</div>
<div class="t" style="left: 1150px; top: 128px; font-size: 11px; color: rgb(26, 26, 26); font-weight: bold; letter-spacing: -0.35px;">TabbedwithNavigation.exe</div>
<div class="chevd" style="left:1121px;top:128px"></div>
<div class="t" style="left: 1164px; top: 146px; font-size: 11px; color: rgb(26, 26, 26); letter-spacing: -0.27px;">Build Configurations (Rel</div>
<div class="chev" style="left:1134px;top:148px"></div>
<div class="t" style="left: 1164px; top: 164px; font-size: 11px; color: rgb(26, 26, 26); letter-spacing: -0.33px;">Target Platforms (Windows</div>
<div class="chevd" style="left:1137px;top:164px"></div>
<div class="t" style="left: 1178px; top: 181px; font-size: 11px; color: rgb(26, 26, 26); letter-spacing: -0.05px;">Android 32-bit - Android</div>
<div class="chev" style="left:1148px;top:183px"></div>
<div class="t" style="left: 1178px; top: 199px; font-size: 11px; color: rgb(26, 26, 26); letter-spacing: -0.05px;">Android 64-bit - Android</div>
<div class="chev" style="left:1148px;top:201px"></div>
<div class="t" style="left: 1178px; top: 217px; font-size: 11px; color: rgb(26, 26, 26); letter-spacing: -0.39px;">iOS Device 64-bit - Mac</div>
<div class="chev" style="left:1148px;top:219px"></div>
<div class="t" style="left: 1178px; top: 234px; font-size: 11px; color: rgb(26, 26, 26); letter-spacing: -0.27px;">iOS Simulator - MacOS</div>
<div class="chev" style="left:1148px;top:236px"></div>
<div class="t" style="left: 1178px; top: 252px; font-size: 11px; color: rgb(26, 26, 26); letter-spacing: -0.26px;">macOS 64-bit - MacOS</div>
<div class="chev" style="left:1148px;top:254px"></div>
<div class="t" style="left: 1178px; top: 270px; font-size: 11px; color: rgb(26, 26, 26); letter-spacing: -0.16px;">Windows 32-bit</div>
<div class="chev" style="left:1148px;top:272px"></div>
<div class="t" style="left: 1178px; top: 287px; font-size: 11px; color: rgb(26, 26, 26); font-weight: bold; letter-spacing: -0.18px;">Windows 64-bit</div>
<div class="chevd" style="left:1151px;top:287px"></div>
<div class="t" style="left: 1192px; top: 305px; font-size: 11px; color: rgb(26, 26, 26); letter-spacing: -0.06px;">Configuration</div>
<div class="chev" style="left:1162px;top:307px"></div>
<div class="t" style="left: 1164px; top: 323px; font-size: 11px; color: rgb(26, 26, 26); letter-spacing: -0.17px;">TabbedFormwithNavigation</div>
<div class="chev" style="left:1134px;top:325px"></div>

<div class="abs" style="left:1112px;top:397px;width:168px;height:26px;background:#e3eef8"></div>
<div class="abs" style="left:1116.500px;top:398px;width:73.500px;height:21.500px;background:#f6f9fc"></div>
<div class="t" style="left: 1123px; top: 404px; font-size: 11px; font-weight: bold; color: rgb(13, 90, 160); letter-spacing: -0.31px;">Tabbedwit...</div>
<div class="t" style="left: 1195px; top: 404px; font-size: 11px; color: rgb(34, 34, 34); letter-spacing: -0.29px;">Model View</div>
<div class="abs" style="left:1258px;top:401px;width:1px;height:15px;background:#9aa6b2"></div>
<div class="t" style="left: 1264px; top: 404px; font-size: 11px; color: rgb(34, 34, 34); letter-spacing: -0.38px;">Dat</div>
<div class="abs" style="left:1112px;top:423px;width:168px;height:32px;background:#cddff0"></div>
<div class="t hdr" style="left: 1120px; top: 436px; letter-spacing: -0.93px;">Palette</div>
<div class="abs" style="left:1116px;top:455px;width:164px;height:23.500px;background:#e6eff8"></div>
<div class="abs" style="left:1233px;top:457px;width:47px;height:20px;background:#f4f8fc"></div>
<div class="abs" style="left:1153px;top:456.500px;width:20.500px;height:21px;background:#a9c8e4"></div>
<svg class="abs" style="left:1118px;top:458px" width="56" height="20" viewBox="1118 458 56 20">
 <path d="M1125.500 461.500h5l3 3v9h-8z" fill="#fff" stroke="#777"></path><rect x="1121" y="465" width="8" height="9" fill="#9434ae"></rect><path d="M1123.500 467v5l1.500-1.200 1 2 .8-.4-1-2h1.800z" fill="#fff"></path>
 <path d="M1140 465l3.500 3.500 3.500-3.500" stroke="#889" stroke-width="1.100" fill="none"></path>
 <rect x="1157" y="461" width="11" height="13" fill="#9434ae"></rect><path d="M1160 463v8l2.200-2 1.500 3 1.200-.6-1.500-3h3z" fill="#fff"></path>
</svg>
<div class="abs" style="left:1116px;top:478.500px;width:164px;height:242px;background:#fdfeff"></div>
<div class="t" style="left: 1138px; top: 484px; font-size: 11px; color: rgb(26, 26, 26); letter-spacing: -0.44px;">Standard</div><div class="chev" style="left:1122px;top:486.0px"></div>
<div class="t" style="left: 1138px; top: 501.7px; font-size: 11px; color: rgb(26, 26, 26); letter-spacing: 0.03px;">Additional</div><div class="chev" style="left:1122px;top:503.7px"></div>
<div class="t" style="left: 1138px; top: 519.4px; font-size: 11px; color: rgb(26, 26, 26); letter-spacing: -0.6px;">System</div><div class="chev" style="left:1122px;top:521.4px"></div>
<div class="t" style="left: 1138px; top: 537px; font-size: 11px; color: rgb(26, 26, 26); letter-spacing: -0.31px;">Dialogs</div><div class="chev" style="left:1122px;top:539.0px"></div>
<div class="t" style="left: 1138px; top: 554.7px; font-size: 11px; color: rgb(26, 26, 26); letter-spacing: -0.49px;">Data Access</div><div class="chev" style="left:1122px;top:556.7px"></div>
<div class="t" style="left: 1138px; top: 572.4px; font-size: 11px; color: rgb(26, 26, 26); letter-spacing: -0.64px;">dbExpress</div><div class="chev" style="left:1122px;top:574.4px"></div>
<div class="t" style="left: 1138px; top: 590.1px; font-size: 11px; color: rgb(26, 26, 26); letter-spacing: -0.34px;">Datasnap Client</div><div class="chev" style="left:1122px;top:592.1px"></div>
<div class="t" style="left: 1138px; top: 607.8px; font-size: 11px; color: rgb(26, 26, 26); letter-spacing: -0.56px;">Datasnap Server</div><div class="chev" style="left:1122px;top:609.8px"></div>
<div class="t" style="left: 1138px; top: 625.4px; font-size: 11px; color: rgb(26, 26, 26); letter-spacing: -0.02px;">Xml</div><div class="chev" style="left:1122px;top:627.4px"></div>
<div class="t" style="left: 1138px; top: 643.1px; font-size: 11px; color: rgb(26, 26, 26); letter-spacing: -0.28px;">LiveBindings</div><div class="chev" style="left:1122px;top:645.1px"></div>
<div class="t" style="left: 1138px; top: 660.8px; font-size: 11px; color: rgb(26, 26, 26); letter-spacing: -0.26px;">LiveBindings Misc</div><div class="chev" style="left:1122px;top:662.8px"></div>
<div class="t" style="left: 1138px; top: 678.5px; font-size: 11px; color: rgb(26, 26, 26); letter-spacing: -0.21px;">Net</div><div class="chev" style="left:1122px;top:680.5px"></div>
<div class="t" style="left: 1138px; top: 696.2px; font-size: 11px; color: rgb(26, 26, 26); letter-spacing: -0.31px;">Tethering</div><div class="chev" style="left:1122px;top:698.2px"></div>
<div class="t" style="left: 1138px; top: 713.8px; font-size: 11px; color: rgb(26, 26, 26); letter-spacing: -0.84px;">Sensors</div><div class="chev" style="left:1122px;top:715.8px"></div>

<div class="abs" style="left:1109.500px;top:58px;width:7px;height:662px;background:#d0e1f1"></div>
<div class="abs" style="left:680px;top:0;width:600px;height:400px;background:radial-gradient(ellipse 560px 340px at 100% 0,rgba(117,102,88,.33) 0%,rgba(115,104,94,.28) 25%,rgba(112,106,100,.2) 48%,rgba(110,108,106,.09) 72%,rgba(110,110,110,0) 100%);pointer-events:none"></div>
<svg class="abs" style="left:1112px;top:20px" width="168" height="140" viewBox="1112 20 168 140"><defs><radialGradient id="gh" cx=".3" cy=".25" r=".8"><stop offset="0" stop-color="#5a6a7a" stop-opacity=".28"></stop><stop offset="1" stop-color="#5a6a7a" stop-opacity="0"></stop></radialGradient></defs><circle cx="1201.500" cy="85.500" r="32" fill="url(#gh)"></circle><path d="M1177.3 47.1L1176.6 36.2L1189.9 33.6L1193.3 44.0A43.5 43.5 0 0 1 1204.2 45.3A43.5 43.5 0 0 1 1218.9 52.2A43.5 43.5 0 0 1 1226.9 59.7A43.5 43.5 0 0 1 1234.8 73.9A43.5 43.5 0 0 1 1236.9 84.6A43.5 43.5 0 0 1 1234.9 100.8A43.5 43.5 0 0 1 1230.3 110.7L1237.3 119.1L1228.1 129.0L1219.2 122.6A43.5 43.5 0 0 1 1209.7 127.9L1210.4 138.8L1197.1 141.4L1193.7 131.0A43.5 43.5 0 0 1 1182.8 129.7L1177.0 138.9L1164.7 133.2L1168.1 122.8A43.5 43.5 0 0 1 1160.1 115.3L1149.9 119.4L1143.4 107.6L1152.2 101.1A43.5 43.5 0 0 1 1150.1 90.4L1139.5 87.7L1141.1 74.3L1152.1 74.2A43.5 43.5 0 0 1 1156.7 64.3L1149.7 55.9L1158.9 46.0L1167.8 52.4A43.5 43.5 0 0 1 1177.3 47.1Z M1233.500 85.500a32 32 0 1 0 -64 0a32 32 0 1 0 64 0Z" fill="#fff" fill-rule="evenodd" opacity=".52"></path></svg>


<div class="abs" style="left:68.500px;top:43px;width:357.500px;height:552.500px;background:#f0f0f0;box-shadow:0 0 0 1px rgba(100,100,100,.5),0 2px 12px rgba(0,0,0,.32)"></div>
<div class="abs" style="left:68.500px;top:43px;width:357.500px;height:27.500px;background:#fff"></div>
<svg class="abs" style="left:74px;top:47px" width="18" height="18" viewBox="74 47 18 18"><circle cx="82.200" cy="55" r="7" fill="#e8141e"></circle><path d="M79.200 51.300h2.600a3.700 3.700 0 0 1 0 7.400h-2.600z" fill="none" stroke="#fff" stroke-width="1.500" stroke-linejoin="round"></path></svg>
<div class="t" style="left: 94px; top: 51px; font-size: 11px; color: rgb(34, 34, 34); letter-spacing: -0.4px;">Form56</div>
<svg class="abs" style="left:316px;top:46px" width="100" height="20" viewBox="316 46 100 20"><path d="M321 55.500h9" stroke="#555" stroke-width="1"></path><rect x="361" y="51" width="8.500" height="8.500" fill="none" stroke="#555" stroke-width=".9"></rect><path d="M401.500 51l8.800 8.500m0-8.500l-8.800 8.500" stroke="#555" stroke-width=".95"></path></svg>
<div class="abs" style="left:157px;top:71px;width:89px;height:42px;background:#fff"></div>
<div class="abs" style="left:334px;top:72px;width:1px;height:41px;background:#e6e6e6"></div>
<div class="abs" style="left:246px;top:72px;width:1px;height:41px;background:#e6e6e6"></div>
<div class="t" style="left: 91px; top: 87px; font-size: 11px; color: rgb(34, 34, 34); letter-spacing: -0.44px;">TabItem1</div>
<div class="t" style="left: 180px; top: 87px; font-size: 11px; color: rgb(34, 34, 34); letter-spacing: -0.41px;">TabItem2</div>
<div class="t" style="left: 268px; top: 87px; font-size: 11px; color: rgb(34, 34, 34); letter-spacing: -0.41px;">TabItem3</div>
<div class="t" style="left: 358px; top: 87px; font-size: 11px; color: rgb(34, 34, 34); letter-spacing: -0.49px;">TabItem4</div>
<div class="t" style="left: 237px; top: 129px; font-size: 11px; color: rgb(34, 34, 34); letter-spacing: -0.23px;">Title</div>
<div class="abs" style="left:69px;top:113px;width:356px;height:42px;background:#f2f2f2"></div>
<div class="t" style="left: 237px; top: 129px; font-size: 11px; color: rgb(34, 34, 34); letter-spacing: -0.23px;">Title</div>
<svg class="abs" style="left:68px;top:270px" width="358" height="210" viewBox="68 270 358 210" font-family="Liberation Sans, sans-serif">
<path d="M146.3 372.4A100 71 0 0 0 182.7 427.2V433.7A100 71 0 0 1 146.3 378.9Z" fill="#0e2c55" stroke="#111" stroke-width=".5"></path><path d="M182.7 427.2A100 71 0 0 0 265.4 442.1V448.6A100 71 0 0 1 182.7 433.7Z" fill="#055a4a" stroke="#111" stroke-width=".5"></path><path d="M265.4 442.1A100 71 0 0 0 343.2 389.9V396.4A100 71 0 0 1 265.4 448.6Z" fill="#b00f08" stroke="#111" stroke-width=".5"></path><path d="M343.2 389.9A100 71 0 0 0 346.3 372.4V378.9A100 71 0 0 1 343.2 396.4Z" fill="#c08830" stroke="#111" stroke-width=".5"></path><path d="M246.3 372.4L346.3 372.4A100 71 0 0 0 314.5 320.5Z" fill="#2b62a8" stroke="#111" stroke-width=".8" stroke-linejoin="round"></path><path d="M246.3 372.4L314.5 320.5A100 71 0 0 0 213.2 305.4Z" fill="#ffa01e" stroke="#111" stroke-width=".8" stroke-linejoin="round"></path><path d="M246.3 372.4L213.2 305.4A100 71 0 0 0 202.5 308.6Z" fill="#ff5a0a" stroke="#111" stroke-width=".8" stroke-linejoin="round"></path><path d="M246.3 372.4L202.5 308.6A100 71 0 0 0 146.3 372.4Z" fill="#1090b4" stroke="#111" stroke-width=".8" stroke-linejoin="round"></path><path d="M246.3 372.4L146.3 372.4A100 71 0 0 0 182.7 427.2Z" fill="#17457c" stroke="#111" stroke-width=".8" stroke-linejoin="round"></path><path d="M246.3 372.4L182.7 427.2A100 71 0 0 0 265.4 442.1Z" fill="#087a66" stroke="#111" stroke-width=".8" stroke-linejoin="round"></path><path d="M246.3 372.4L265.4 442.1A100 71 0 0 0 343.2 389.9Z" fill="#e3140c" stroke="#111" stroke-width=".8" stroke-linejoin="round"></path><path d="M246.3 372.4L343.2 389.9A100 71 0 0 0 346.3 372.4Z" fill="#ffb84d" stroke="#111" stroke-width=".8" stroke-linejoin="round"></path>
<g stroke-width="1" fill="none"><path d="M151.600 403.600L157.100 401.400" stroke="#fff"></path><path d="M219.400 445L221.900 440.200" stroke="#7fe0e0"></path><path d="M314.100 423.400L319.600 427.400" stroke="#fff"></path><path d="M343.600 389.800L345.600 382.500" stroke="#c8b070"></path><path d="M267.700 302.600L270.500 299" stroke="#fff"></path></g><rect x="165.8" y="287.0" width="40.4" height="17.8" rx="2" fill="#000" opacity=".28"></rect><rect x="163.8" y="285.0" width="40.4" height="17.8" rx="2" fill="#ffffe6" stroke="#4a4a4a" stroke-width="1.100"></rect><text x="184.0" y="297.9" text-anchor="middle" font-size="11" fill="#222" textLength="28" lengthAdjust="spacingAndGlyphs">Tables</text><rect x="269.7" y="282.8" width="47.3" height="17.7" rx="2" fill="#000" opacity=".28"></rect><rect x="267.7" y="280.8" width="47.3" height="17.7" rx="2" fill="#ffffe6" stroke="#4a4a4a" stroke-width="1.100"></rect><text x="291.4" y="293.6" text-anchor="middle" font-size="11" fill="#222" textLength="33.7" lengthAdjust="spacingAndGlyphs">Phones</text><rect x="346.7" y="326.8" width="33.0" height="17.7" rx="2" fill="#000" opacity=".28"></rect><rect x="344.7" y="324.8" width="33.0" height="17.7" rx="2" fill="#ffffe6" stroke="#4a4a4a" stroke-width="1.100"></rect><text x="361.2" y="337.6" text-anchor="middle" font-size="11" fill="#222" textLength="19.8" lengthAdjust="spacingAndGlyphs">Cars</text><rect x="354.6" y="384.2" width="40.9" height="17.8" rx="2" fill="#000" opacity=".28"></rect><rect x="352.6" y="382.2" width="40.9" height="17.8" rx="2" fill="#ffffe6" stroke="#4a4a4a" stroke-width="1.100"></rect><text x="373.1" y="395.1" text-anchor="middle" font-size="11" fill="#222" textLength="28.7" lengthAdjust="spacingAndGlyphs">Chairs</text><rect x="321.6" y="429.4" width="36.7" height="17.6" rx="2" fill="#000" opacity=".28"></rect><rect x="319.6" y="427.4" width="36.7" height="17.6" rx="2" fill="#ffffe6" stroke="#4a4a4a" stroke-width="1.100"></rect><text x="338.0" y="440.2" text-anchor="middle" font-size="11" fill="#222" textLength="23.2" lengthAdjust="spacingAndGlyphs">Bikes</text><rect x="160.7" y="447.7" width="61.7" height="18.0" rx="2" fill="#000" opacity=".28"></rect><rect x="158.7" y="445.7" width="61.7" height="18.0" rx="2" fill="#ffffe6" stroke="#4a4a4a" stroke-width="1.100"></rect><text x="189.6" y="458.7" text-anchor="middle" font-size="11" fill="#222" textLength="48.6" lengthAdjust="spacingAndGlyphs">Keyboards</text><rect x="110.0" y="407.4" width="42.4" height="17.6" rx="2" fill="#000" opacity=".28"></rect><rect x="108.0" y="405.4" width="42.4" height="17.6" rx="2" fill="#ffffe6" stroke="#4a4a4a" stroke-width="1.100"></rect><text x="129.2" y="418.2" text-anchor="middle" font-size="11" fill="#222" textLength="29.6" lengthAdjust="spacingAndGlyphs">Lamps</text><rect x="102.6" y="317.0" width="55.0" height="17.7" rx="2" fill="#000" opacity=".28"></rect><rect x="100.6" y="315.0" width="55.0" height="17.7" rx="2" fill="#ffffe6" stroke="#4a4a4a" stroke-width="1.100"></rect><text x="128.1" y="327.9" text-anchor="middle" font-size="11" fill="#222" textLength="41.9" lengthAdjust="spacingAndGlyphs">Monitors</text>
</svg>
<svg class="abs" style="left:259px;top:90px" width="16" height="22" viewBox="0 0 16 22"><path d="M2 1.500v14l3.300-3.200 2.500 5.700 2-0.900-2.500-5.600h4.500z" fill="#fff" stroke="#111" stroke-width="1"></path></svg>



</body></html>
